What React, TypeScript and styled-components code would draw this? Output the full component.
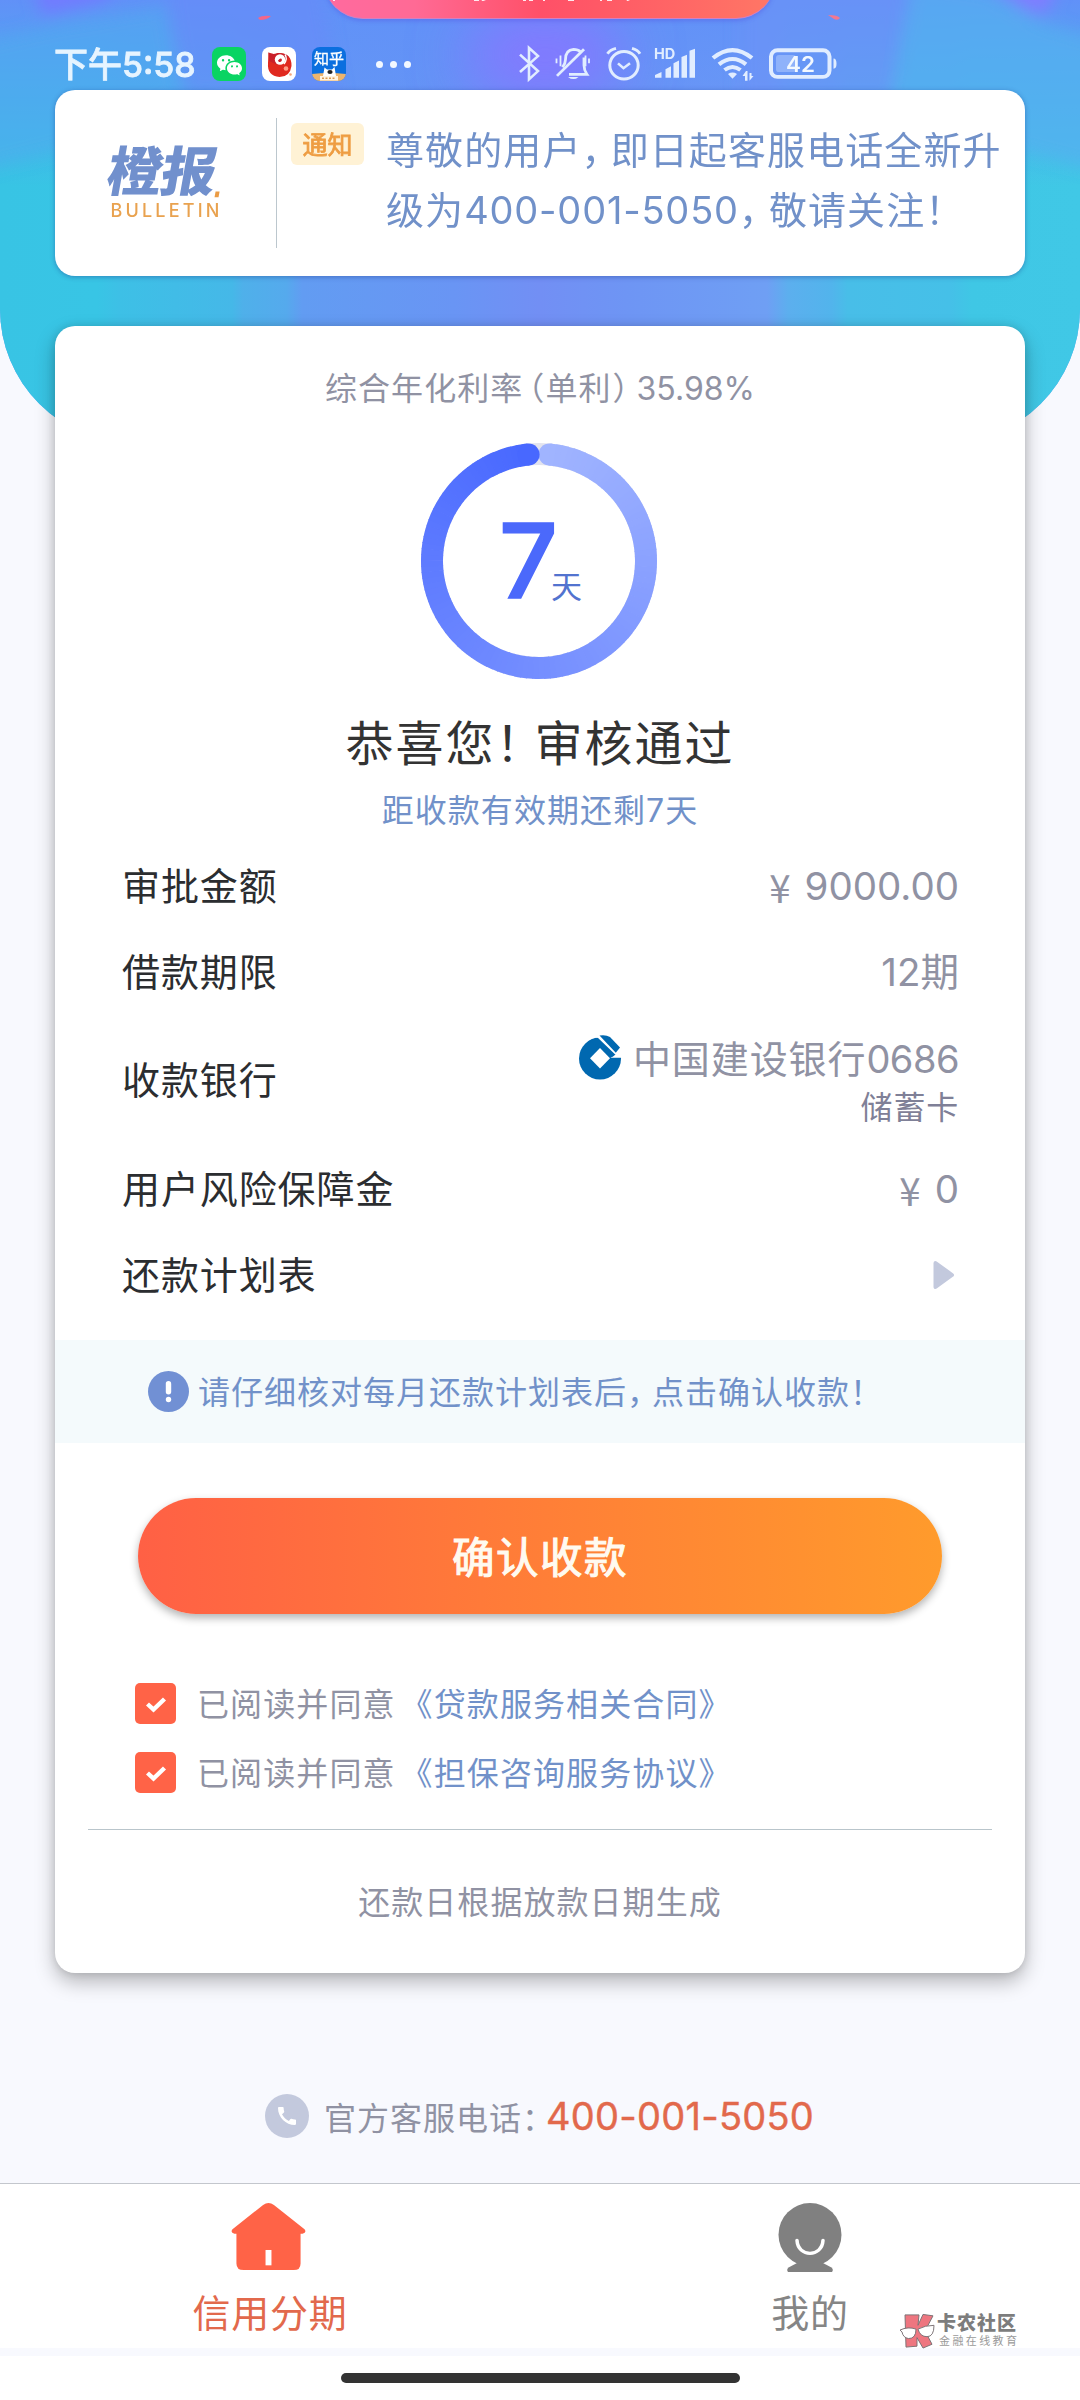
import React from "react";
import styled, { createGlobalStyle, css } from "styled-components";
import { BsWechat } from "react-icons/bs";
import { MdCall } from "react-icons/md";

const INK = "#2b2d30";
const GREY = "#9092a3";
const LINK = "#7191c9";
const ACCENT = "#ff6347";

const GlobalStyle = createGlobalStyle`
  * { box-sizing: border-box; }
  body {
    margin: 0;
    background: #f8f9fe;
    font-family: Inter, "Noto Sans CJK SC", sans-serif;
    -webkit-font-smoothing: antialiased;
  }
`;

const Page = styled.main`
  position: relative;
  display: flex;
  flex-direction: column;
  width: 1080px;
  height: 2400px;
  overflow: hidden;
  background: #f8f9fe;
`;

/* ---------- hero backdrop ---------- */

const Backdrop = styled.div`
  position: absolute;
  inset: 0 0 auto 0;
  height: 443px;
  overflow: hidden;
  border-radius: 0 0 134px 134px;
  background: #5f9cf3;
`;

const Pill = styled.div`
  position: absolute;
  top: -60px;
  left: 324px;
  display: flex;
  align-items: flex-end;
  width: 451px;
  height: 79px;
  padding-bottom: 16px;
  overflow: hidden;
  border-radius: 39px;
  border-bottom: 1px solid #d47fc0;
  background: linear-gradient(90deg, #ff6a9f 0%, #ff6a95 20%, #ff5068 48%, #ff5866 60%, #ff7765 100%);
  box-shadow: 0 2px 4px rgba(80, 70, 220, 0.35);
`;

/* ---------- status bar ---------- */

const StatusBar = styled.header`
  position: relative;
  display: flex;
  align-items: flex-start;
  height: 90px;
  padding: 47px 0 0 54px;
  color: #e6f4ff;
`;

const Clock = styled.div`
  width: 158px;
  font-size: 34px;
  font-weight: 500;
  line-height: 35px;
  white-space: nowrap;
  -webkit-text-stroke: 0.8px #e6f4ff;
`;

const AppIcons = styled.div`
  display: flex;
  gap: 16px;
  width: 162px;
`;

const AppIcon = styled.div<{ $bg: string }>`
  display: flex;
  flex-direction: column;
  align-items: center;
  justify-content: center;
  width: 34px;
  height: 34px;
  overflow: hidden;
  border-radius: 8px;
  background: ${(p) => p.$bg};
  color: #fff;
`;

const ZhihuName = styled.span`
  height: 20px;
  font-size: 15px;
  line-height: 24px;
  -webkit-text-stroke: 0.3px #fff;
`;

const Dots = styled.div`
  display: flex;
  gap: 7px;
  width: 143px;
  padding-top: 14px;
  padding-left: 2px;
  & > i {
    width: 7px;
    height: 7px;
    border-radius: 50%;
    background: #f2f8ff;
  }
`;

const Indicators = styled.div`
  margin-top: -3px;
`;

/* ---------- cards ---------- */

const cardSurface = css`
  position: relative;
  width: 970px;
  margin-left: 55px;
  border-radius: 20px;
  background: #fff;
`;

const Bulletin = styled.section`
  ${cardSurface}
  display: flex;
  height: 186px;
  box-shadow: 0 1px 5px rgba(30, 60, 140, 0.45);
`;

const Brand = styled.div`
  display: flex;
  flex-direction: column;
  align-items: center;
  width: 221px;
  padding-top: 51px;
`;

const BrandName = styled.div`
  display: flex;
  align-items: flex-end;
  height: 62px;
  font-size: 55px;
  font-weight: 900;
  line-height: 61px;
  letter-spacing: -1px;
  color: #7190cd;
  transform: skewX(-10deg) scaleY(0.97);
  & > i {
    width: 4px;
    height: 6px;
    margin: 0 0 5px 3px;
    background: #eb9c44;
  }
`;

const BrandLatin = styled.div`
  height: 18px;
  padding-left: 2px;
  font-size: 18px;
  font-weight: 500;
  line-height: 16px;
  letter-spacing: 3.2px;
  color: #e9a24f;
`;

const VLine = styled.div`
  width: 1px;
  height: 130px;
  margin-top: 28px;
  background: #bcc7ce;
`;

const Tag = styled.div`
  width: 73px;
  height: 42px;
  margin: 33px 0 0 14px;
  border-radius: 6px;
  background: #fff2d5;
  color: #ee9d43;
  font-size: 25px;
  line-height: 44px;
  text-align: center;
  -webkit-text-stroke: 0.8px #ee9d43;
`;

const Notice = styled.div`
  margin: 29.5px 0 0 22px;
  font-size: 38px;
  line-height: 60px;
  letter-spacing: 1.1px;
  color: ${LINK};
  white-space: nowrap;
`;

/* Half-width form of full-width punctuation, padded on either side. */
const Punct = styled.span<{ $before?: number; $after?: number }>`
  padding-left: ${(p) => p.$before ?? 0}px;
  padding-right: ${(p) => p.$after ?? 0}px;
  font-feature-settings: "halt" 1;
`;

const Num = styled.span<{ $track?: number }>`
  letter-spacing: ${(p) => p.$track ?? 0}px;
`;

const Approval = styled.section`
  ${cardSurface}
  display: flex;
  flex-direction: column;
  align-items: center;
  height: 1647px;
  margin-top: 50px;
  box-shadow: 0 9px 20px rgba(0, 0, 0, 0.27), 0 0 8px rgba(0, 0, 0, 0.12);
`;

const Line = styled.div<{ $top: number; $h?: number; $size?: number; $color?: string; $track?: number }>`
  height: ${(p) => p.$h ?? 40}px;
  margin-top: ${(p) => p.$top}px;
  font-size: ${(p) => p.$size ?? 32}px;
  line-height: ${(p) => p.$h ?? 40}px;
  letter-spacing: ${(p) => p.$track ?? 1.05}px;
  color: ${(p) => p.$color ?? GREY};
  white-space: nowrap;
`;

const RingBox = styled.div`
  display: grid;
  width: 236px;
  height: 236px;
  margin: 34px 2px 0 0;
  & > * {
    grid-area: 1 / 1;
  }
`;

const DaysLeft = styled.div`
  display: flex;
  align-items: baseline;
  height: 236px;
  padding-left: 78px;
  line-height: 236px;
  color: #4b69fb;
`;

const DayNumber = styled.span`
  width: 52px;
  font-size: 103px;
  font-weight: 500;
  letter-spacing: -8px;
  -webkit-text-stroke: 1.6px #4b69fb;
`;

const DayUnit = styled.span`
  font-size: 31px;
  color: #5273cf;
`;

const Details = styled.dl`
  display: flex;
  flex-direction: column;
  width: 100%;
  margin: 12px 0 0;
  padding: 0 66px 0 67px;
`;

const Row = styled.div<{ $h?: number }>`
  display: flex;
  align-items: center;
  justify-content: space-between;
  height: ${(p) => p.$h ?? 86}px;
  font-size: 38px;
  line-height: 51px;
`;

const Label = styled.dt`
  letter-spacing: 0.9px;
  color: ${INK};
`;

const Value = styled.dd`
  display: flex;
  align-items: center;
  margin: 0;
  font-size: 38.5px;
  color: ${GREY};
  white-space: nowrap;
`;

const Yen = styled.span`
  margin-right: 14px;
  font-family: "Noto Sans CJK SC", sans-serif;
`;

const Bank = styled.dd`
  display: flex;
  flex-direction: column;
  align-items: flex-end;
  margin: 3px 0 0;
  color: #7f8097;
`;

const BankName = styled.div`
  display: flex;
  align-items: center;
  height: 50px;
  font-size: 38px;
  letter-spacing: 0.9px;
  color: ${GREY};
  & > svg {
    margin: -3px 11px 0 0;
  }
`;

const CardKind = styled.div`
  height: 46px;
  font-size: 32px;
  line-height: 48px;
  letter-spacing: 0.8px;
`;

const Reminder = styled.div`
  display: flex;
  align-items: center;
  width: 100%;
  height: 103px;
  margin-top: 22px;
  padding-left: 93px;
  background: #f4fafc;
  color: ${LINK};
  font-size: 32px;
  letter-spacing: 1px;
  white-space: nowrap;
  & > svg {
    margin-right: 9px;
  }
  & > span {
    padding-bottom: 4px;
  }
`;

const Confirm = styled.button`
  width: 804px;
  height: 116px;
  margin-top: 55px;
  padding: 0 0 3px;
  border: 0;
  border-radius: 58px;
  background: linear-gradient(90deg, #ff6045 0%, #ff7c38 46%, #ff9b2c 100%);
  box-shadow: 0 4px 8px rgba(0, 0, 0, 0.3);
  color: #fffaf0;
  font-family: inherit;
  font-size: 42.500px;
  letter-spacing: 1.5px;
  -webkit-text-stroke: 1.1px #fffaf0;
`;

const Agreements = styled.div`
  width: 100%;
  margin-top: 55px;
  padding-left: 80px;
`;

const Agreement = styled.div`
  display: flex;
  align-items: center;
  height: 69px;
  font-size: 32px;
  letter-spacing: 1.1px;
  color: ${GREY};
  white-space: nowrap;
`;

const Terms = styled.span`
  padding-bottom: 3px;
`;

const Check = styled.span`
  display: grid;
  place-items: center;
  width: 41px;
  height: 41px;
  margin-right: 21px;
  border-radius: 5px;
  background: ${ACCENT};
`;

const DocLink = styled.a`
  margin-left: 5px;
  color: ${LINK};
`;

const Rule = styled.div`
  width: 904px;
  height: 1px;
  margin-top: 22px;
  background: #b9c5cb;
`;

/* ---------- support line ---------- */

const Support = styled.div`
  display: flex;
  align-items: center;
  height: 60px;
  margin-top: 113px;
  padding-left: 265px;
  font-size: 32px;
  letter-spacing: 1px;
  color: ${GREY};
  white-space: nowrap;
`;

const PhoneBadge = styled.span`
  display: grid;
  place-items: center;
  width: 44px;
  height: 44px;
  margin-right: 15px;
  border-radius: 50%;
  background: #c3c9dd;
`;

const PhoneNumber = styled.span`
  font-size: 38px;
  letter-spacing: 0.25px;
  color: #e2694c;
  -webkit-text-stroke: 0.4px #e2694c;
`;

/* ---------- tab bar ---------- */

const Tabs = styled.nav`
  position: relative;
  display: flex;
  height: 165px;
  margin-top: 37px;
  border-top: 1px solid #c3c7cd;
  background: #fff;
`;

const Tab = styled.div<{ $active?: boolean }>`
  display: flex;
  flex: 1;
  flex-direction: column;
  align-items: center;
  padding-top: 19px;
  color: ${(p) => (p.$active ? "#e2694c" : "#858585")};
  font-size: 38px;
  letter-spacing: 0.8px;
  line-height: 52px;
  & > svg {
    margin: 0 ${(p) => (p.$active ? 3 : 0)}px 14px 0;
  }
`;

const Watermark = styled.div`
  position: absolute;
  left: 899px;
  top: 129px;
  display: flex;
  color: #7d7d7d;
`;

const WatermarkText = styled.div`
  display: flex;
  flex-direction: column;
  padding-left: 1px;
  & > b {
    height: 20px;
    font-size: 19px;
    font-weight: 900;
    line-height: 21px;
    letter-spacing: 1px;
  }
  & > small {
    height: 16px;
    padding-left: 2px;
    font-size: 11px;
    line-height: 17px;
    letter-spacing: 2.4px;
    color: #9a9a9a;
  }
`;

const HomeIndicator = styled.footer`
  display: flex;
  justify-content: center;
  height: 44px;
  margin-top: 8px;
  padding-top: 17px;
  background: #fff;
  & > i {
    width: 399px;
    height: 10px;
    border-radius: 5px;
    background: #333;
  }
`;

/* ---------- drawings ---------- */

const Rays = () => (
  <svg width="1080" height="443" viewBox="0 0 1080 443">
    <defs>
      <linearGradient id="sweep" x1="0" x2="1" y1="0" y2="0">
        <stop offset="0" stopColor="#38c4e4" />
        <stop offset="0.09" stopColor="#38c5e5" />
        <stop offset="0.11" stopColor="#3dc0e6" />
        <stop offset="0.215" stopColor="#45b8e8" />
        <stop offset="0.225" stopColor="#4fb0ea" />
        <stop offset="0.265" stopColor="#55aaed" />
        <stop offset="0.28" stopColor="#629cf2" />
        <stop offset="0.42" stopColor="#6995f4" />
        <stop offset="0.5" stopColor="#728ff4" />
        <stop offset="0.58" stopColor="#6e95f4" />
        <stop offset="0.71" stopColor="#6f9ff4" />
        <stop offset="0.73" stopColor="#5cafee" />
        <stop offset="0.77" stopColor="#52b4ec" />
        <stop offset="0.785" stopColor="#48bee8" />
        <stop offset="0.88" stopColor="#45c0e8" />
        <stop offset="0.9" stopColor="#3fc7e5" />
        <stop offset="1" stopColor="#40c8e6" />
      </linearGradient>
      <linearGradient id="fade" x1="0" x2="0" y1="0" y2="1">
        <stop offset="0" stopColor="#6191f8" />
        <stop offset="0.1" stopColor="#6191f8" stopOpacity="0.75" />
        <stop offset="0.42" stopColor="#6191f8" stopOpacity="0" />
      </linearGradient>
      <filter id="soft" x="-20%" y="-20%" width="140%" height="140%">
        <feGaussianBlur stdDeviation="8" />
      </filter>
      <filter id="softer" x="-60%" y="-80%" width="220%" height="260%">
        <feGaussianBlur stdDeviation="28" />
      </filter>
    </defs>
    <rect width="1080" height="443" fill="url(#sweep)" />
    <rect width="1080" height="443" fill="url(#fade)" />
    <g filter="url(#soft)">
      <path d="M32 -20 L130 -20 L100 2 L42 15 Z" fill="#7379ff" opacity="0.9" />
      <path d="M-20 42 L60 24 L165 6 L180 95 L60 150 L-20 170 Z" fill="#4eabee" opacity="0.55" />
      <path d="M165 -20 L320 -20 L340 100 L185 95 Z" fill="#678bf8" opacity="0.6" />
      <path d="M985 -20 L1060 -20 L1046 14 L1028 10 Z" fill="#837cff" opacity="0.9" />
      <path d="M913 -20 L985 -10 L1040 22 L1100 40 L1100 170 L985 140 L890 100 Z" fill="#55b0ef" opacity="0.7" />
      <path d="M740 -20 L910 -20 L890 100 L740 100 Z" fill="#6c93f7" opacity="0.6" />
    </g>
    <ellipse cx="545" cy="55" rx="80" ry="42" fill="#8478ff" filter="url(#softer)" />
    <path d="M258 18 Q262 15 271 16 Q267 20 260 20 Z" fill="#f2678a" />
    <path d="M828 15 Q838 15 840 18 Q838 21 834 19 Z" fill="#f2788f" />
  </svg>
);

const PillSpecks = () => (
  <svg width="451" height="3" viewBox="0 0 451 3">
    <path
      d="M9 0 H11 V2 H9 Z M150 0 H155 V2 H150 Z M157 0 L162 2 H158 Z M199 0 H202 V2 H199 Z M205 0 H209 V2 H205 Z M219 0 H221 V2 H219 Z M244 0 H250 V2 H244 Z M276 0 H278 V2 H276 Z M283 0 H288 V2 H283 Z M302 0 L306 2 H303 Z"
      fill="#ffe9ee"
    />
  </svg>
);

const mix = (t: number) => {
  const a = [160, 180, 255];
  const b = [72, 104, 255];
  return `rgb(${a.map((v, i) => Math.round(v + (b[i] - v) * t)).join(",")})`;
};

const point = (deg: number) => {
  const r = (deg * Math.PI) / 180;
  return [118 + 107 * Math.sin(r), 118 - 107 * Math.cos(r)];
};

const Ring = () => {
  const from = 5.6;
  const to = 354.4;
  const steps = 120;
  const step = (to - from) / steps;
  const [sx, sy] = point(from);
  const [ex, ey] = point(to);
  return (
    <svg width="236" height="236" viewBox="0 0 236 236" fill="none">
      <circle cx="118" cy="118" r="107" stroke="#e2e3ee" strokeWidth="22" />
      <circle cx={sx} cy={sy} r="11" fill={mix(0)} />
      {Array.from({ length: steps }, (_, i) => {
        const [x1, y1] = point(from + i * step);
        const [x2, y2] = point(Math.min(to, from + (i + 1) * step + 0.4));
        return (
          <path
            key={i}
            d={`M${x1} ${y1} A107 107 0 0 1 ${x2} ${y2}`}
            stroke={mix(i / steps)}
            strokeWidth="22"
          />
        );
      })}
      <circle cx={ex} cy={ey} r="11" fill={mix(1)} />
    </svg>
  );
};

const MusicLogo = () => (
  <svg width="30" height="30" viewBox="0 0 30 30" fill="none">
    <path d="M4.500 3.500 Q9 6 14 4 Q28 4 27.500 17 Q26 28 15.500 28 Q3 27 4 14 Z" fill="#e0291f" />
    <path d="M4.500 3.500 Q9 6 14 4 Q22 4 25 8 L14 16 L5 12 Z" fill="#c9202a" />
    <circle cx="16" cy="10.500" r="5.200" fill="#fff" />
    <path d="M14 11.500 Q17 8 18 11 Q17 14 14.500 12.500 Z" fill="#c9202a" />
    <path d="M20 15 Q24 10 21 5.500" stroke="#fff" strokeWidth="1.400" />
    <circle cx="22" cy="19.500" r="2.300" fill="#ff9c86" />
    <circle cx="26.500" cy="25.500" r="1.300" fill="#f4a67a" />
  </svg>
);

const ZhihuMascot = () => (
  <svg width="34" height="14" viewBox="0 0 34 14">
    <path d="M0 7 Q17 5 34 7 V14 H0 Z" fill="#eeb56d" />
    <path d="M11 9 L12.500 0.500 L15 2.500 H20 L22.500 0 L24 9 Z" fill="#fff" />
    <ellipse cx="18" cy="5" rx="2.600" ry="2" fill="#222" />
    <path d="M8 9 H26 V13.500 H8 Z" fill="#fff3e0" />
    <path d="M10 11.200 H24" stroke="#d99a52" strokeWidth="1.500" strokeDasharray="2 1.500" />
  </svg>
);

const StatusIcons = () => (
  <svg
    width="324"
    height="38.7"
    viewBox="517 46 324 40"
    preserveAspectRatio="none"
    fill="none"
    stroke="#e1edff"
    strokeWidth="3"
  >
    <path d="M520 57 L538 74 L529 82.500 V50 L538 58.500 L520 75" strokeWidth="2.600" />
    <path d="M562.500 70 Q565.500 66 565.500 62 Q565.500 52 573.500 51.500 Q578 51.500 580.500 54 M584 60 V68 Q584 73 587 77.500 H569" strokeWidth="2.800" />
    <path d="M557 79 L584 51.500" strokeWidth="2.800" />
    <path d="M556.500 61 V66 M560.500 58 V69 M585.500 58 V69 M589 61 V66" strokeWidth="1.800" />
    <path d="M568 80 H578.500 Q573.500 84.500 568 80 Z" fill="#e1edff" stroke="none" />
    <circle cx="624" cy="68" r="14.200" />
    <path d="M618 66 L623.500 71 L630 66" strokeWidth="2.600" />
    <path d="M607.500 56 Q610 52 616 50.500 M632 50.500 Q637.500 52 640 56" />
    <g fill="#e1edff" stroke="none">
      <path d="M655 81 V78 L661.500 75 V81 Z M665.500 72 L671 69 V81 H665.500 Z M673.500 66 L679 63 V81 H673.500 Z M681.500 59.500 L687 57 V81 H681.500 Z M689.500 53 L695 51 V81 H689.500 Z" />
      <path d="M728 77 Q732.500 74 737 77 L732.500 82 Z" />
      <path d="M746 74 L742.500 79 H745 V84 H747.500 V74 Z M749.500 76 V84 L753.500 79 H751.500 V76 Z" />
    </g>
    <path d="M713 60.500 Q732.500 44 752 60.500" strokeWidth="4.200" />
    <path d="M719 67 Q732.500 56 746 67" strokeWidth="4.200" />
    <path d="M724.500 73 Q732.500 66.500 740.500 73" strokeWidth="4" />
    <rect x="771" y="52.500" width="58.500" height="27.500" rx="6.500" strokeWidth="4" />
    <rect x="776" y="57.500" width="20" height="17.500" rx="3" fill="#8fb2fa" stroke="none" />
    <path d="M833.500 61 Q836.500 61 836.500 66.500 Q836.500 71.500 833.500 71.500 Z" fill="#e1edff" stroke="none" />
    <text x="654" y="61" fill="#e1edff" stroke="none" fontSize="14.500" fontWeight="700" fontFamily="Inter, sans-serif">HD</text>
    <text x="786" y="75" fill="#f2f8ff" stroke="none" fontSize="22.500" fontWeight="600" fontFamily="Inter, sans-serif">42</text>
  </svg>
);

const BankLogo = () => (
  <svg width="43" height="45" viewBox="0 0 43 45">
    <circle cx="21" cy="23.500" r="21" fill="#0068b0" />
    <path d="M16 0 L44 -2 V22.800 H31 L21 13 L31 22.800 L36.500 19.800 L18 2 Z" fill="#fff" />
    <path d="M17 2.800 L35.200 20.800 L31 23 L21 13 L10 6 Z" fill="#0068b0" />
    <path d="M20.500 0.500 Q27 -0.500 31 2 L41 12.500 L36.800 17.800 Z" fill="#0068b0" />
    <path d="M21 13 L31 23.200 L21 33.500 L11 23.200 Z" fill="#fff" />
  </svg>
);

const AlertIcon = () => (
  <svg width="41" height="41" viewBox="0 0 41 41">
    <circle cx="20.500" cy="20.500" r="20.500" fill="#7190d4" />
    <rect x="17.800" y="10" width="5.400" height="13.500" rx="2.700" fill="#fff" />
    <circle cx="20.500" cy="28.500" r="2.700" fill="#fff" />
  </svg>
);

const Tick = () => (
  <svg width="22" height="18" viewBox="0 0 22 18" fill="none">
    <path d="M2.500 9 L8.500 14.500 L19.500 4" stroke="#fff" strokeWidth="4.400" />
  </svg>
);

const Caret = () => (
  <svg width="26" height="30" viewBox="0 0 26 30">
    <path d="M2.500 3 L19 15 L2.500 27 Z" fill="#c3c9dd" stroke="#c3c9dd" strokeWidth="4" strokeLinejoin="round" />
  </svg>
);

const HouseIcon = () => (
  <svg width="75" height="70" viewBox="0 0 76 73" preserveAspectRatio="none">
    <path
      d="M32.500 2 Q38 -2 43.500 2 L74.500 27.500 Q77 31 72.500 32 H70.500 V63 Q70.500 70 63.500 70 H13 Q5.500 70 5.500 63 V32 H3.500 Q-1 31 1.500 27.500 Z"
      fill="#ff6347"
    />
    <rect x="35" y="49" width="6" height="16" fill="#fff" />
  </svg>
);

const FaceIcon = () => (
  <svg width="64" height="70" viewBox="0 0 64 73" preserveAspectRatio="none">
    <ellipse cx="32" cy="33" rx="31.500" ry="33" fill="#808080" />
    <path d="M20 62 H44 L53 67 Q56 69 54 72 H10 Q8 69 11 67 Z" fill="#808080" />
    <path d="M19 39 C20 57 44 57 45 39" fill="none" stroke="#fff" strokeWidth="3.500" strokeLinecap="round" />
  </svg>
);

const KMark = () => (
  <svg width="37" height="36" viewBox="0 0 37 38" preserveAspectRatio="none" stroke="#7b7275" strokeWidth="1">
    <path d="M6 2 H20 L19 13 L24 1.500 L34 3 L26 19 L33 33 L24 37 L18 26 V35 L7 36 Z" fill="#ee7680" />
    <path d="M1 18 Q9 14 17 17 Q17 27 9.500 27 Q4 26 3 20 Z" fill="#fff" />
    <path d="M19 17 Q26 13 35 13 Q35 25 28 25 Q21 25 19 17 Z" fill="#fff" />
  </svg>
);

const agreements = ["《贷款服务相关合同》", "《担保咨询服务协议》"];

export default function App() {
  return (
    <>
      <GlobalStyle />
      <Page>
        <Backdrop>
          <Rays />
          <Pill>
            <PillSpecks />
          </Pill>
        </Backdrop>

        <StatusBar>
          <Clock>下午5:58</Clock>
          <AppIcons>
            <AppIcon $bg="#09d463">
              <BsWechat size={25} />
            </AppIcon>
            <AppIcon $bg="#fff">
              <MusicLogo />
            </AppIcon>
            <AppIcon $bg="#0b6fdf">
              <ZhihuName>知乎</ZhihuName>
              <ZhihuMascot />
            </AppIcon>
          </AppIcons>
          <Dots>
            <i />
            <i />
            <i />
          </Dots>
          <Indicators>
            <StatusIcons />
          </Indicators>
        </StatusBar>

        <Bulletin>
          <Brand>
            <BrandName>
              橙报
              <i />
            </BrandName>
            <BrandLatin>BULLETIN</BrandLatin>
          </Brand>
          <VLine />
          <Tag>通知</Tag>
          <Notice>
            尊敬的用户<Punct $after={9}>，</Punct>即日起客服电话全新升
            <br />
            级为<Num $track={0.8}>400-001-5050</Num>
            <Punct $after={10}>，</Punct>敬请关注<Punct>！</Punct>
          </Notice>
        </Bulletin>

        <Approval>
          <Line $top={43}>
            综合年化利率<Punct $before={5}>（</Punct>单利<Punct $before={1} $after={7}>）</Punct>
            <Num>35.98%</Num>
          </Line>
          <RingBox>
            <Ring />
            <DaysLeft>
              <DayNumber>7</DayNumber>
              <DayUnit>天</DayUnit>
            </DaysLeft>
          </RingBox>
          <Line $top={35} $h={60} $size={48} $track={2} $color="#333">
            恭喜您<Punct $after={13}>！</Punct>审核通过
          </Line>
          <Line $top={17} $color={LINK}>
            距收款有效期还剩7天
          </Line>

          <Details>
            <Row>
              <Label>审批金额</Label>
              <Value>
                <Yen>¥</Yen>9000.00
              </Value>
            </Row>
            <Row>
              <Label>借款期限</Label>
              <Value>12期</Value>
            </Row>
            <Row $h={131}>
              <Label>收款银行</Label>
              <Bank>
                <BankName>
                  <BankLogo />
                  中国建设银行<Num $track={-0.5}>0686</Num>
                </BankName>
                <CardKind>储蓄卡</CardKind>
              </Bank>
            </Row>
            <Row>
              <Label>用户风险保障金</Label>
              <Value>
                <Yen>¥</Yen>0
              </Value>
            </Row>
            <Row>
              <Label>还款计划表</Label>
              <Caret />
            </Row>
          </Details>

          <Reminder>
            <AlertIcon />
            <span>
              请仔细核对每月还款计划表后<Punct $after={8}>，</Punct>点击确认收款<Punct>！</Punct>
            </span>
          </Reminder>

          <Confirm>确认收款</Confirm>

          <Agreements>
            {agreements.map((name) => (
              <Agreement key={name}>
                <Check>
                  <Tick />
                </Check>
                <Terms>
                  已阅读并同意<DocLink>{name}</DocLink>
                </Terms>
              </Agreement>
            ))}
          </Agreements>
          <Rule />
          <Line $top={53}>还款日根据放款日期生成</Line>
        </Approval>

        <Support>
          <PhoneBadge>
            <MdCall size={24} color="#fff" />
          </PhoneBadge>
          <span>
            官方客服电话<Punct $after={7}>：</Punct>
          </span>
          <PhoneNumber>400-001-5050</PhoneNumber>
        </Support>

        <Tabs>
          <Tab $active>
            <HouseIcon />
            信用分期
          </Tab>
          <Tab>
            <FaceIcon />
            我的
          </Tab>
          <Watermark>
            <KMark />
            <WatermarkText>
              <b>卡农社区</b>
              <small>金融在线教育</small>
            </WatermarkText>
          </Watermark>
        </Tabs>

        <HomeIndicator>
          <i />
        </HomeIndicator>
      </Page>
    </>
  );
}
